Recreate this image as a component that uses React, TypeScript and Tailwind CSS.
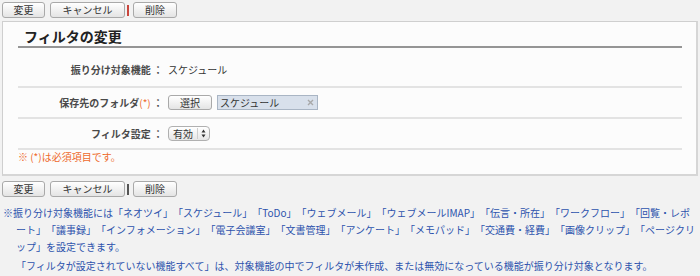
import React from "react";

const font = "font-['Noto_Sans_CJK_JP','Noto_Sans',sans-serif]";

const Btn = ({ label, w }: { label: string; w: string }) => (
    <button
        className={`${w} h-[16px] flex items-center justify-center border border-[#a9a9a9] rounded-[3px] bg-linear-to-b from-white to-[#e4e4e4] text-[10px] leading-none text-[#333]`}
    >
        {label}
    </button>
);

const ButtonBar = ({ bar }: { bar: string }) => (
    <div className="flex items-center h-[16px] pl-[2px]">
        <Btn label="変更" w="w-[43px]" />
        <div className="w-[5px]" />
        <Btn label="キャンセル" w="w-[75px]" />
        <div className={`ml-[2px] mr-[4px] w-[2px] h-[11px] ${bar}`} />
        <Btn label="削除" w="w-[44px]" />
    </div>
);

const Row = ({ label, first, children }: { label: React.ReactNode; first?: boolean; children: React.ReactNode }) => (
    <div
        className={`flex items-center border-b-2 border-[#e3e3e3] ${first ? "h-[40px] pt-[6px]" : "h-[31px]"}`}
    >
        <div className="w-[145px] text-right font-bold text-[#4a4a4a] whitespace-nowrap">{label}</div>
        <div className="pl-[5px] flex items-center">{children}</div>
    </div>
);

export default function App() {
    return (
        <div className={`min-h-screen bg-[#f2f2f2] ${font} text-[10px] leading-[14px] text-[#333] [text-spacing-trim:space-all] pt-[2px]`}>
            <ButtonBar bar="bg-[#c9463d]" />

            <div className="mt-[3px] mx-[2px] bg-[#fcfcfc] border border-[#cfcfcf] border-r-2 border-b-2 border-r-[#d6d6d6] border-b-[#d6d6d6] pl-[15px] pr-[14px] pb-[10px]">
                <div className="h-[26px] pt-[4px] border-b-2 border-[#959595] pl-[6px]">
                    <h1 className="text-[14px] leading-[20px] font-bold text-[#222]">フィルタの変更</h1>
                </div>

                <Row label="振り分け対象機能 ：" first>
                    <span>スケジュール</span>
                </Row>

                <Row
                    label={
                        <>
                            保存先のフォルダ<span className="text-[#ee6a2c] font-normal">(*)</span> ：
                        </>
                    }
                >
                    <button className="w-[44px] h-[15px] flex items-center justify-center border border-[#a9a9a9] rounded-[3px] bg-linear-to-b from-white to-[#e4e4e4] leading-none text-[#333]">
                        選択
                    </button>
                    <div className="ml-[5px] w-[101px] h-[15px] flex items-center justify-between pl-[2px] pr-[3px] bg-[#d8e0eb] border border-[#a9b5c4] leading-none">
                        <span>スケジュール</span>
                        <svg width="7" height="7" viewBox="0 0 7 7">
                            <path d="M1 1 L6 6 M6 1 L1 6" stroke="#a8a8a8" strokeWidth="1.4" />
                        </svg>
                    </div>
                </Row>

                <Row label="フィルタ設定 ：">
                    <div className="w-[42px] h-[15px] flex items-center border border-[#b0b0b0] rounded-[4px] bg-linear-to-b from-white to-[#e6e6e6] leading-none">
                        <span className="pl-[4px] w-[28px]">有効</span>
                        <div className="w-px h-[11px] bg-[#cfcfcf]" />
                        <svg className="ml-[3px]" width="5" height="9" viewBox="0 0 5 9">
                            <path d="M2.5 0.5 L4.5 3.5 L0.5 3.5 Z M2.5 8.5 L4.5 5.5 L0.5 5.5 Z" fill="#333" />
                        </svg>
                    </div>
                </Row>

                <p className="h-[14px] text-[#ee6a2c]">※ (*)は必須項目です。</p>
            </div>

            <div className="mt-[5px]">
                <ButtonBar bar="bg-[#555]" />
            </div>

            <div className="mt-[7px] pl-[16px] pr-[2px] text-[#2d52ad] leading-[17px]">
                <p className="-indent-[13px]">
                    ※振り分け対象機能には「ネオツイ」「スケジュール」「ToDo」「ウェブメール」「ウェブメールIMAP」「伝言・所在」「ワークフロー」「回覧・レポート」「議事録」「インフォメーション」「電子会議室」「文書管理」「アンケート」「メモパッド」「交通費・経費」「画像クリップ」「ページクリップ」を設定できます。
                </p>
                <p className="mt-[2px]">
                    「フィルタが設定されていない機能すべて」は、対象機能の中でフィルタが未作成、または無効になっている機能が振り分け対象となります。
                </p>
            </div>
        </div>
    );
}
